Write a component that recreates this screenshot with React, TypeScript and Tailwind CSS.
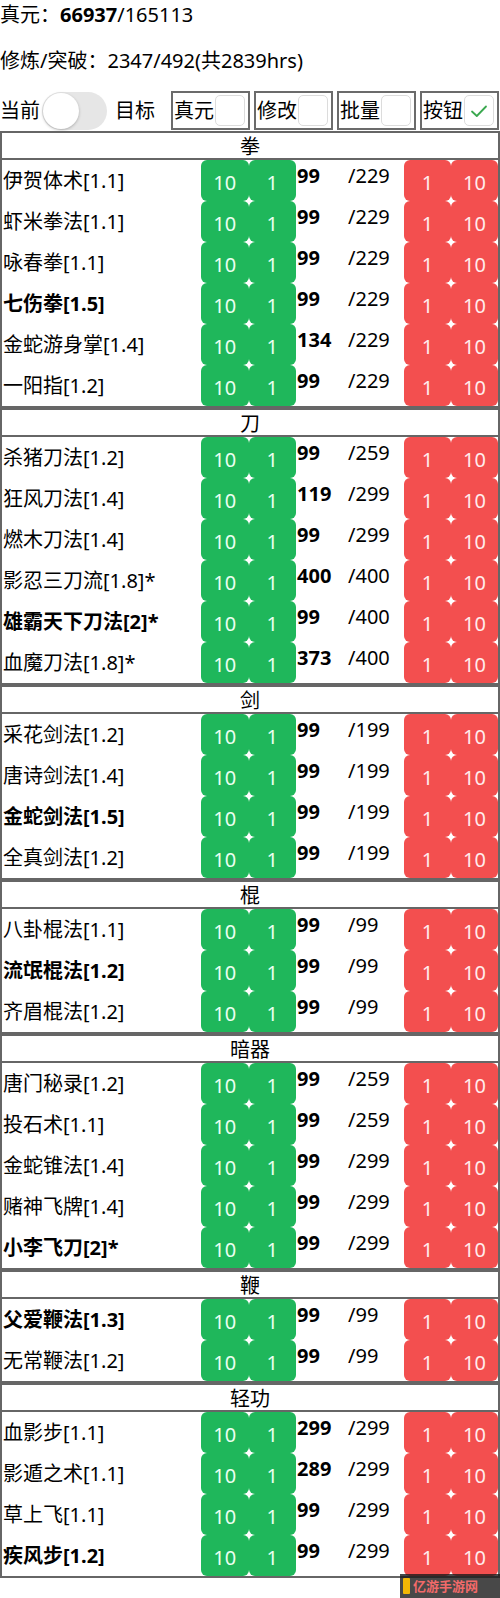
import React from "react";

type Skill = { n: string; b?: boolean; c: string; m: string };
type Section = { title: string; items: Skill[] };

const sections: Section[] = [
  {
    title: "拳",
    items: [
      { n: "伊贺体术[1.1]", c: "99", m: "/229" },
      { n: "虾米拳法[1.1]", c: "99", m: "/229" },
      { n: "咏春拳[1.1]", c: "99", m: "/229" },
      { n: "七伤拳[1.5]", b: true, c: "99", m: "/229" },
      { n: "金蛇游身掌[1.4]", c: "134", m: "/229" },
      { n: "一阳指[1.2]", c: "99", m: "/229" },
    ],
  },
  {
    title: "刀",
    items: [
      { n: "杀猪刀法[1.2]", c: "99", m: "/259" },
      { n: "狂风刀法[1.4]", c: "119", m: "/299" },
      { n: "燃木刀法[1.4]", c: "99", m: "/299" },
      { n: "影忍三刀流[1.8]*", c: "400", m: "/400" },
      { n: "雄霸天下刀法[2]*", b: true, c: "99", m: "/400" },
      { n: "血魔刀法[1.8]*", c: "373", m: "/400" },
    ],
  },
  {
    title: "剑",
    items: [
      { n: "采花剑法[1.2]", c: "99", m: "/199" },
      { n: "唐诗剑法[1.4]", c: "99", m: "/199" },
      { n: "金蛇剑法[1.5]", b: true, c: "99", m: "/199" },
      { n: "全真剑法[1.2]", c: "99", m: "/199" },
    ],
  },
  {
    title: "棍",
    items: [
      { n: "八卦棍法[1.1]", c: "99", m: "/99" },
      { n: "流氓棍法[1.2]", b: true, c: "99", m: "/99" },
      { n: "齐眉棍法[1.2]", c: "99", m: "/99" },
    ],
  },
  {
    title: "暗器",
    items: [
      { n: "唐门秘录[1.2]", c: "99", m: "/259" },
      { n: "投石术[1.1]", c: "99", m: "/259" },
      { n: "金蛇锥法[1.4]", c: "99", m: "/299" },
      { n: "赌神飞牌[1.4]", c: "99", m: "/299" },
      { n: "小李飞刀[2]*", b: true, c: "99", m: "/299" },
    ],
  },
  {
    title: "鞭",
    items: [
      { n: "父爱鞭法[1.3]", b: true, c: "99", m: "/99" },
      { n: "无常鞭法[1.2]", c: "99", m: "/99" },
    ],
  },
  {
    title: "轻功",
    items: [
      { n: "血影步[1.1]", c: "299", m: "/299" },
      { n: "影遁之术[1.1]", c: "289", m: "/299" },
      { n: "草上飞[1.1]", c: "99", m: "/299" },
      { n: "疾风步[1.2]", b: true, c: "99", m: "/299" },
    ],
  },
];

function GreenBtn({ t }: { t: string }) {
  return (
    <div className="flex-1 h-full rounded-[6px] bg-[#1fb75b] text-[#eafff0] text-xl flex items-center justify-center pt-[4px]">
      {t}
    </div>
  );
}

function RedBtn({ t }: { t: string }) {
  return (
    <div className="flex-1 h-full rounded-[6px] bg-[#f34f4f] text-[#ffecec] text-xl flex items-center justify-center pt-[4px]">
      {t}
    </div>
  );
}

function Check({ checked }: { checked?: boolean }) {
  return (
    <div className="w-[30px] h-[31px] rounded-[5px] border border-[#dcdcdc] bg-white flex items-center justify-center">
      {checked && (
        <svg width="18" height="14" viewBox="0 0 18 14" fill="none">
          <path d="M2 7.5 L6.8 12 L16 2.5" stroke="#3aa84f" strokeWidth="1.8" strokeLinecap="round" strokeLinejoin="round" />
        </svg>
      )}
    </div>
  );
}

function OptBox({ label, checked }: { label: string; checked?: boolean }) {
  return (
    <div className="w-[79px] h-[39px] border-2 border-[#6b6b6b] flex items-center pl-[1px] gap-[1px]">
      <span className="text-xl leading-none">{label}</span>
      <Check checked={checked} />
    </div>
  );
}

export default function App() {
  return (
    <div
      className="relative w-[500px] h-[1598px] overflow-hidden bg-white text-black"
      style={{ fontFamily: '"Noto Sans", "Noto Sans CJK SC", sans-serif' }}
    >
      <div className="h-[30px] flex items-center text-xl">
        <span>真元：</span>
        <span className="font-bold">66937</span>
        <span>/165113</span>
      </div>
      <div className="mt-[16px] h-[30px] flex items-center text-xl">修炼/突破：2347/492(共2839hrs)</div>
      <div className="mt-[15px] h-[39px] flex items-center">
        <span className="text-xl w-[42px]">当前</span>
        <div className="w-[65px] h-[38px] rounded-full bg-[#e6e6e6] flex items-center px-[1px]">
          <div className="w-[36px] h-[36px] rounded-full bg-white shadow-[0_1px_3px_rgba(0,0,0,0.25)]" />
        </div>
        <span className="text-xl ml-[8px] w-[56px]">目标</span>
        <div className="flex gap-[4px]">
          <OptBox label="真元" />
          <OptBox label="修改" />
          <OptBox label="批量" />
          <OptBox label="按钮" checked />
        </div>
      </div>

      <div className="mt-[1px] flex flex-col">
        {sections.map((s) => (
          <div key={s.title} className="border-2 border-[#666]">
            <div className="h-[27px] border-b-2 border-[#666] flex items-center justify-center text-xl pt-[2px]">{s.title}</div>
            {s.items.map((it) => (
              <div key={it.n} className="flex h-[41px]">
                <div className={`w-[199px] flex items-center pl-[1px] text-xl ${it.b ? "font-bold" : ""}`}>{it.n}</div>
                <div className="w-[95px] flex">
                  <GreenBtn t="10" />
                  <GreenBtn t="1" />
                </div>
                <div className="w-[51px] text-xl font-bold leading-8 pl-[1px]">{it.c}</div>
                <div className="w-[57px] text-xl leading-8 pl-[1px]">{it.m}</div>
                <div className="w-[94px] flex">
                  <RedBtn t="1" />
                  <RedBtn t="10" />
                </div>
              </div>
            ))}
          </div>
        ))}
      </div>

      <div className="absolute right-0 bottom-0 w-[100px] h-[24px] bg-[#1a1a1a]/80 flex items-center pl-[3px] gap-[3px]">
        <div className="w-[7px] h-[16px] bg-[#f2b705] rounded-[1px]" />
        <span className="text-[13px] font-bold text-[#f36a6a] leading-none">亿游手游网</span>
      </div>
    </div>
  );
}
